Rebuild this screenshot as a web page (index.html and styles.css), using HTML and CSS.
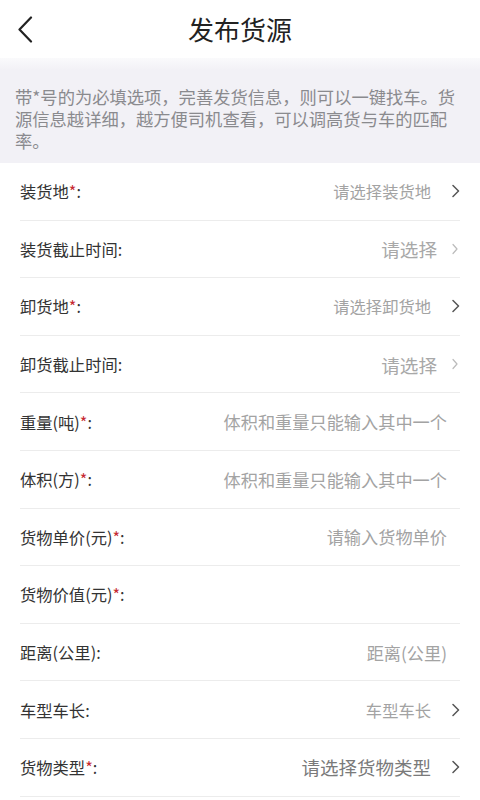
FILE: index.html
```html
<!DOCTYPE html>
<html lang="zh-CN">
<head>
<meta charset="utf-8">
<title>发布货源</title>
<link rel="stylesheet" href="styles.css">
</head>
<body>
<header class="topbar">
  <div class="back">
    <svg width="16" height="27" viewBox="0 0 16 27"><path d="M14 1.5 L2.5 13.5 L14 25.5" fill="none" stroke="#222" stroke-width="2.2" stroke-linecap="round" stroke-linejoin="round"/></svg>
  </div>
  <h1 class="title">发布货源</h1>
  <div></div>
</header>
<div class="notice">带*号的为必填选项，完善发货信息，则可以一键找车。货源信息越详细，越方便司机查看，可以调高货与车的匹配率。</div>
<ul class="form">
  <li class="row"><span class="label">装货地<em>*</em>:</span><span class="value sel">请选择装货地</span><svg class="chev" width="8" height="14" viewBox="0 0 8 14"><path d="M1 1.5 L6.5 7 L1 12.5" fill="none" stroke="#555" stroke-width="1.5" stroke-linecap="round" stroke-linejoin="round"/></svg></li>
  <li class="row"><span class="label">装货截止时间:</span><span class="value big">请选择</span><svg class="chev light" width="6" height="12" viewBox="0 0 6 12"><path d="M1 1.5 L5 6 L1 10.5" fill="none" stroke="#bbb" stroke-width="1.2" stroke-linecap="round" stroke-linejoin="round"/></svg></li>
  <li class="row"><span class="label">卸货地<em>*</em>:</span><span class="value sel">请选择卸货地</span><svg class="chev" width="8" height="14" viewBox="0 0 8 14"><path d="M1 1.5 L6.5 7 L1 12.5" fill="none" stroke="#555" stroke-width="1.5" stroke-linecap="round" stroke-linejoin="round"/></svg></li>
  <li class="row"><span class="label">卸货截止时间:</span><span class="value big">请选择</span><svg class="chev light" width="6" height="12" viewBox="0 0 6 12"><path d="M1 1.5 L5 6 L1 10.5" fill="none" stroke="#bbb" stroke-width="1.2" stroke-linecap="round" stroke-linejoin="round"/></svg></li>
  <li class="row"><span class="label">重量(吨)<em>*</em>:</span><span class="value input">体积和重量只能输入其中一个</span></li>
  <li class="row"><span class="label">体积(方)<em>*</em>:</span><span class="value input">体积和重量只能输入其中一个</span></li>
  <li class="row"><span class="label">货物单价(元)<em>*</em>:</span><span class="value input">请输入货物单价</span></li>
  <li class="row"><span class="label">货物价值(元)<em>*</em>:</span><span class="value input"></span></li>
  <li class="row"><span class="label">距离(公里):</span><span class="value input">距离(公里)</span></li>
  <li class="row"><span class="label">车型车长:</span><span class="value sel">车型车长</span><svg class="chev" width="8" height="14" viewBox="0 0 8 14"><path d="M1 1.5 L6.5 7 L1 12.5" fill="none" stroke="#555" stroke-width="1.5" stroke-linecap="round" stroke-linejoin="round"/></svg></li>
  <li class="row"><span class="label">货物类型<em>*</em>:</span><span class="value type">请选择货物类型</span><svg class="chev" width="8" height="14" viewBox="0 0 8 14"><path d="M1 1.5 L6.5 7 L1 12.5" fill="none" stroke="#555" stroke-width="1.5" stroke-linecap="round" stroke-linejoin="round"/></svg></li>
</ul>
</body>
</html>
```
FILE: styles.css
```css
* { box-sizing: border-box; }
html, body {
  margin: 0;
  padding: 0;
  background: #fff;
  font-family: "Noto Sans CJK SC", "Noto Sans", sans-serif;
  overflow: hidden;
}
.topbar {
  height: 58px;
  display: grid;
  grid-template-columns: 1fr auto 1fr;
  align-items: center;
  background: #fff;
}
.back {
  padding-left: 17px;
  display: flex;
  align-items: center;
  height: 58px;
}
.title {
  margin: 0;
  font-size: 26px;
  font-weight: 400;
  color: #222;
  line-height: 1;
}
.notice {
  background: linear-gradient(#fafafc 0, #f2f1f6 12px, #f2f1f6 100%);
  color: #8a8a8e;
  font-size: 17.3px;
  line-height: 22px;
  padding: 28px 18px 11px 15px;
  height: 105px;
}
.form {
  list-style: none;
  margin: 0;
  padding: 0;
}
.row {
  margin: 0 20px;
  height: 57.6px;
  border-bottom: 1px solid #ececec;
  display: flex;
  align-items: center;
}
.label {
  font-size: 16.3px;
  color: #333;
}
.label em {
  font-style: normal;
  color: #c62a2f;
}
.value {
  margin-left: auto;
  color: #a3a3a3;
  white-space: nowrap;
}
.value.sel {
  font-size: 16.3px;
  margin-right: 21px;
}
.value.big {
  font-size: 18.6px;
  color: #a8a8a8;
  margin-right: 15px;
}
.value.input {
  font-size: 17.2px;
  margin-right: 13px;
}
.value.type {
  font-size: 18.5px;
  color: #7a7a7a;
  margin-right: 21px;
}
.chev {
  flex: none;
  display: block;
}
.chev.light {
  margin-right: 2px;
}
```
